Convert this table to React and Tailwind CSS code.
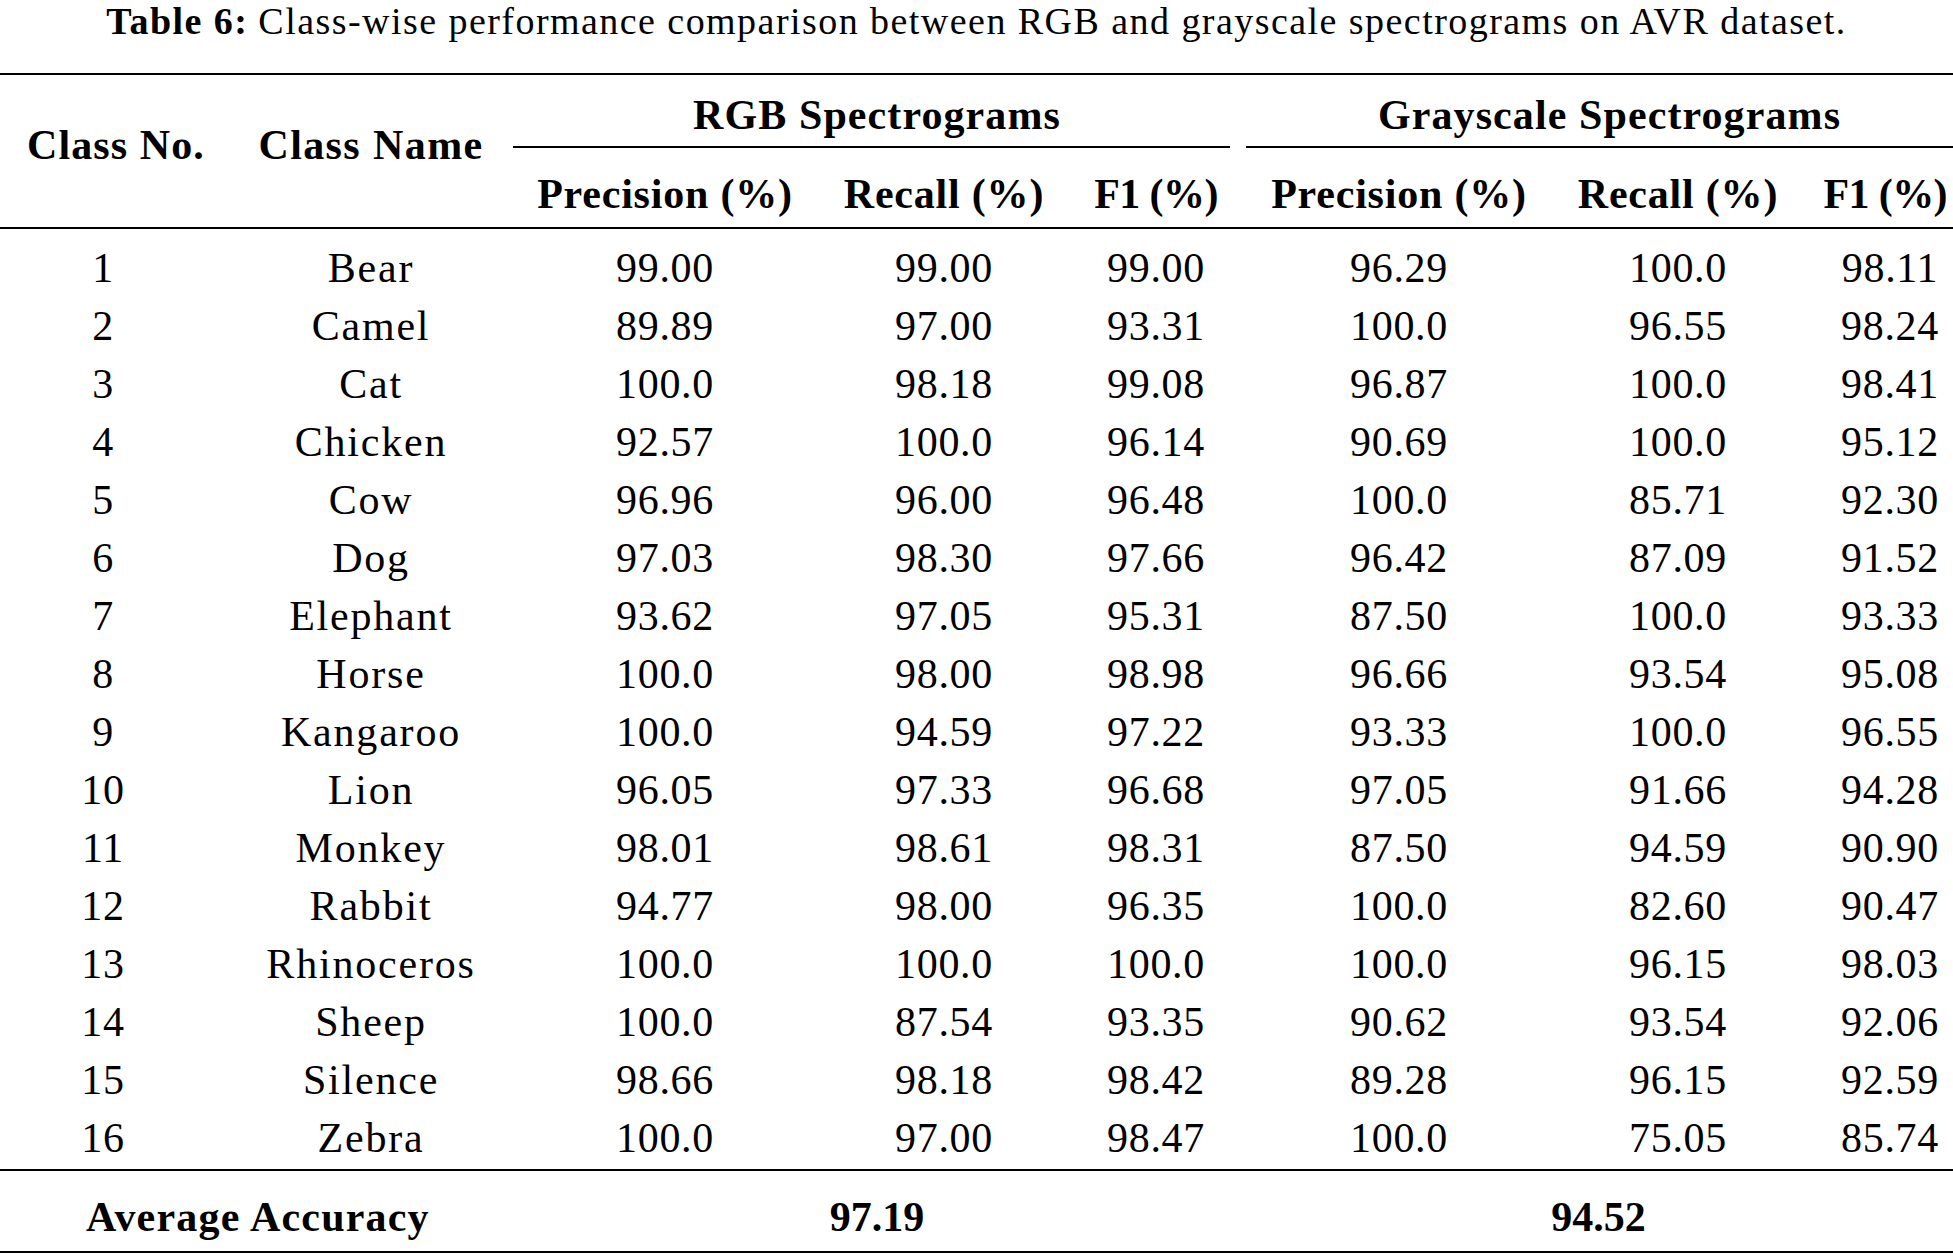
import React from "react";

const rows = [
  ["1", "Bear", "99.00", "99.00", "99.00", "96.29", "100.0", "98.11"],
  ["2", "Camel", "89.89", "97.00", "93.31", "100.0", "96.55", "98.24"],
  ["3", "Cat", "100.0", "98.18", "99.08", "96.87", "100.0", "98.41"],
  ["4", "Chicken", "92.57", "100.0", "96.14", "90.69", "100.0", "95.12"],
  ["5", "Cow", "96.96", "96.00", "96.48", "100.0", "85.71", "92.30"],
  ["6", "Dog", "97.03", "98.30", "97.66", "96.42", "87.09", "91.52"],
  ["7", "Elephant", "93.62", "97.05", "95.31", "87.50", "100.0", "93.33"],
  ["8", "Horse", "100.0", "98.00", "98.98", "96.66", "93.54", "95.08"],
  ["9", "Kangaroo", "100.0", "94.59", "97.22", "93.33", "100.0", "96.55"],
  ["10", "Lion", "96.05", "97.33", "96.68", "97.05", "91.66", "94.28"],
  ["11", "Monkey", "98.01", "98.61", "98.31", "87.50", "94.59", "90.90"],
  ["12", "Rabbit", "94.77", "98.00", "96.35", "100.0", "82.60", "90.47"],
  ["13", "Rhinoceros", "100.0", "100.0", "100.0", "100.0", "96.15", "98.03"],
  ["14", "Sheep", "100.0", "87.54", "93.35", "90.62", "93.54", "92.06"],
  ["15", "Silence", "98.66", "98.18", "98.42", "89.28", "96.15", "92.59"],
  ["16", "Zebra", "100.0", "97.00", "98.47", "100.0", "75.05", "85.74"],
];

const cols = "grid grid-cols-[232px_278px_310px_248px_176px_310px_248px_151px]";

export default function App() {
  return (
    <div
      className="w-[1953px] h-[1256px] bg-white text-black overflow-hidden"
      style={{ fontFamily: '"Liberation Serif", "Times New Roman", serif' }}
    >
      {/* Caption */}
      <div className="h-[73px] flex justify-center">
        <div className="h-[42px] leading-[42px] text-[38px] tracking-[1.45px] whitespace-nowrap">
          <span className="font-bold">Table 6:</span>
          <span className="ml-[10px]">
            Class-wise performance comparison between RGB and grayscale spectrograms on AVR dataset.
          </span>
        </div>
      </div>

      {/* top rule */}
      <div className="h-[2px] bg-black" />

      {/* header */}
      <div className={`${cols} grid-rows-[71px_2px_79px] text-[42px] font-bold leading-none tracking-[1.1px]`}>
        <div className="row-span-3 col-start-1 flex items-center justify-center pb-[12px] whitespace-nowrap">
          Class No.
        </div>
        <div className="row-span-3 col-start-2 flex items-center justify-center pb-[12px] whitespace-nowrap tracking-[1.4px]">
          Class Name
        </div>
        <div className="col-start-3 col-span-3 row-start-1 flex items-center justify-center pt-[9px] whitespace-nowrap">
          RGB Spectrograms
        </div>
        <div className="col-start-6 col-span-3 row-start-1 flex items-center justify-center pt-[9px] pl-[22px] whitespace-nowrap">
          Grayscale Spectrograms
        </div>
        <div className="col-start-3 col-span-3 row-start-2 ml-[3px] mr-[14px] bg-black" />
        <div className="col-start-6 col-span-3 row-start-2 ml-[2px] bg-black" />
        <div className="col-start-3 row-start-3 flex items-center justify-center pt-[13px] whitespace-nowrap tracking-[0.8px]">Precision (%)</div>
        <div className="col-start-4 row-start-3 flex items-center justify-center pt-[13px] whitespace-nowrap tracking-[0.8px]">Recall (%)</div>
        <div className="col-start-5 row-start-3 flex items-center justify-center pt-[13px] whitespace-nowrap tracking-[-0.6px]">F1 (%)</div>
        <div className="col-start-6 row-start-3 flex items-center justify-center pt-[13px] whitespace-nowrap tracking-[0.8px]">Precision (%)</div>
        <div className="col-start-7 row-start-3 flex items-center justify-center pt-[13px] whitespace-nowrap tracking-[0.8px]">Recall (%)</div>
        <div className="col-start-8 row-start-3 flex items-center justify-end pt-[13px] pr-[6px] whitespace-nowrap tracking-[-0.6px]">F1 (%)</div>
      </div>

      {/* mid rule */}
      <div className="h-[2px] bg-black" />

      {/* body */}
      <div className="pt-[10px] pb-[2px] text-[42px]">
        {rows.map((r) => (
          <div key={r[0]} className={`${cols} h-[58px] leading-[58px] text-center whitespace-nowrap tracking-[0.7px]`}>
            <div className="pr-[26px]">{r[0]}</div>
            <div className="tracking-[1.8px]">{r[1]}</div>
            <div>{r[2]}</div>
            <div>{r[3]}</div>
            <div>{r[4]}</div>
            <div>{r[5]}</div>
            <div>{r[6]}</div>
            <div className="pl-[25px]">{r[7]}</div>
          </div>
        ))}
      </div>

      {/* rule */}
      <div className="h-[2px] bg-black" />

      {/* average */}
      <div className={`${cols} h-[80px] pt-[12px] text-[42px] font-bold leading-[68px] whitespace-nowrap`}>
        <div className="col-span-2 pl-[86px] tracking-[1.2px]">Average Accuracy</div>
        <div className="col-span-3 text-center">97.19</div>
        <div className="col-span-3 text-center">94.52</div>
      </div>

      {/* bottom rule */}
      <div className="h-[2px] bg-black" />
    </div>
  );
}
